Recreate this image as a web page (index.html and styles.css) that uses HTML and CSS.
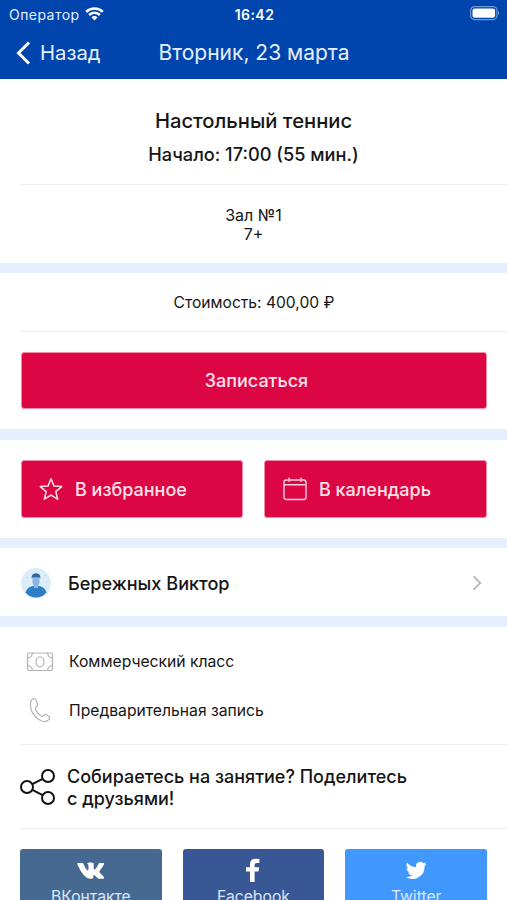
FILE: index.html
```html
<!DOCTYPE html>
<html lang="ru">
<head>
<meta charset="utf-8">
<title>Настольный теннис</title>
<link rel="stylesheet" href="styles.css">
</head>
<body>
<header class="header">
  <div class="status">
    <div class="carrier"><span>Оператор</span>
      <svg width="19" height="14" viewBox="0 0 19 14" fill="none" stroke="#fff" stroke-width="2.5"><path d="M1.2 4.9a11.8 11.8 0 0 1 16.6 0M4.1 8a7.6 7.6 0 0 1 10.8 0"/><path d="M9.5 13.5 6.4 10.3a4.4 4.4 0 0 1 6.2 0z" fill="#fff" stroke="none"/></svg>
    </div>
    <span class="clock">16:42</span>
    <svg class="battery" width="31" height="15" viewBox="0 0 31 15"><rect x="1.6" y=".6" width="26.4" height="13" rx="4" fill="none" stroke="#6f98d6" stroke-width="1.2"/><rect x="3.5" y="2.4" width="22.600" height="9.4" rx="2.2" fill="#fff"/><path d="M29 4.8q2.4 2.2 0 4.4z" fill="#6f98d6"/></svg>
  </div>
  <nav class="navbar">
    <div class="back"><svg width="15" height="24" viewBox="0 0 15 24" fill="none" stroke="#fff" stroke-width="3"><path d="M13 1.5 2.5 12 13 22.5"/></svg><span>Назад</span></div>
    <h1>Вторник, 23 марта</h1>
  </nav>
</header>
<main>
  <section class="intro">
    <h2>Настольный теннис</h2>
    <p class="start">Начало: 17:00 (55 мин.)</p>
  </section>
  <section class="hall line"><p>Зал №1</p><p>7+</p></section>
  <div class="band"></div>
  <section class="price"><span>Стоимость: 400,00 ₽</span></section>
  <section class="signup line"><button class="button"><span>Записаться</span></button></section>
  <div class="band band-tall"></div>
  <section class="actions">
    <button class="button with-icon"><svg width="24" height="24" viewBox="0 0 24 24" fill="none" stroke="#ffe2ea" stroke-width="1.5" stroke-linejoin="round"><path d="m12 1.800 3 7.300 7.700.5-5.900 5 1.900 7.600L12 18.100l-6.700 4.100 1.900-7.600-5.900-5L9 9.100z"/></svg><span>В избранное</span></button>
    <button class="button with-icon calendar"><svg width="24" height="24" viewBox="0 0 24 24" fill="none" stroke="#ffd0dd" stroke-width="1.4"><rect x="1" y="3" width="22" height="19.500" rx="2.300"/><path d="M1 7.800h22M6 .8v4M18 .8v4"/></svg><span>В календарь</span></button>
  </section>
  <div class="band"></div>
  <section class="coach">
    <svg class="avatar" width="30" height="30" viewBox="0 0 30 30"><circle cx="15" cy="15" r="15" fill="#dcedfa"/><path d="M4.500 24.500c1-4.200 4.200-5.800 7.500-6.600h6c3.300.8 6.600 2.400 7.500 6.600Q21.500 29.500 15 29.500T4.500 24.500z" fill="#2c7fc4"/><path d="M11.500 9h7v5.500q-.5 2.500-1.500 3.200V20h-4v-2.300q-1.500-1.200-1.500-3.200z" fill="#8eb4e2"/><path d="M10.700 10.800Q10 5.400 15 5.200q5 .2 4.300 5.600l-1-1.500h-6.600z" fill="#2c689f"/><path d="M5 9.500h2M23 7.500h2M25 14h1.500" stroke="#b7d7ed"/></svg>
    <span class="coach-name">Бережных Виктор</span>
    <svg class="chevron" width="10" height="16" viewBox="0 0 10 16" fill="none" stroke="#bdbdbd" stroke-width="2"><path d="m1.500 1.200 6.800 6.800-6.800 6.800"/></svg>
  </section>
  <div class="band band-tall"></div>
  <section class="details">
    <div class="detail"><svg width="28" height="20" viewBox="0 0 28 20" fill="none" stroke="#b3b3b3" stroke-width="1.2"><rect x="1.500" y="1" width="25" height="17.500" rx="1.500"/><ellipse cx="14" cy="9.800" rx="4" ry="5"/><path d="M1.500 6q4.500-.5 5-5M21.500 1q.5 4.500 5 5M1.500 13.500q4.500.5 5 5M21.500 18.500q.5-4.500 5-5"/></svg><span>Коммерческий класс</span></div>
    <div class="detail"><svg width="28" height="26" viewBox="0 0 28 26" fill="none" stroke="#b3b3b3" stroke-width="1.2" stroke-linejoin="round"><path d="M6.300 1.200C7.800.3 9.300.5 10 2.200l1.500 3.600c.6 1.700-.2 2.500-1.500 3.400-1 .8-.8 1.700-.2 2.900 1.300 2.400 3.100 4.400 5.100 5.600 1.200.8 2 .6 2.800-.3.900-1 2-1.200 3.200-.4l2 1.500c1.200.9.9 2.200-.2 3.200-2.800 2.800-6.600 2.500-10.700-.8C7.200 17.300 4.700 12.300 4.400 7.400 4.200 4.700 4.600 2.400 6.300 1.200z"/></svg><span>Предварительная запись</span></div>
  </section>
  <section class="invite line">
    <svg width="36" height="36" viewBox="0 0 36 36" fill="none" stroke="#111" stroke-width="2"><circle cx="7" cy="18" r="6"/><circle cx="28" cy="7" r="6"/><circle cx="28" cy="29" r="6"/><path d="m12.300 15.200 10.400-5.400m-10.400 11 10.400 5.400"/></svg>
    <p><span>Собираетесь на занятие? Поделитесь</span><br><span>с друзьями!</span></p>
  </section>
  <section class="social line">
    <div class="network vk"><svg width="28" height="24" viewBox="0 0 28 24" fill="#fff"><path d="M1 5h4.300q.8 0 1.100.8 1.900 5 4 6.600 1.100.3 1.100-1.300V7.700Q11.400 6 10 5.500q.8-1 3-1 3.300-.1 3.700 1v5.300q.3 1.300 1.400.5 1.900-1.800 3.400-5.400.4-.9 1.200-.9H26q1.500.1 1 1.300-.9 2.500-4.400 6.700-.6.9.2 1.800 3.500 3.200 4.200 4.700.4 1.100-1 1.200h-4q-1 0-1.800-.9-2.800-3.100-3.500-2.700-.4.200-.4 2.200 0 1.400-1.400 1.400h-2Q6.700 20.500.4 6.500-.1 5.100 1 5z"/></svg><span>ВКонтакте</span></div>
    <div class="network facebook"><svg width="18" height="24" viewBox="0 0 18 24" fill="#fff"><path d="M6 24V13.500H2V9.300h4V6.200Q6 .8 11.600.8q2.300 0 3.800.3v3.800h-2.500q-2.300 0-2.300 2.100v2.300h4.600l-.7 4.200h-3.900V24z"/></svg><span>Facebook</span></div>
    <div class="network twitter"><svg width="22" height="24" viewBox="0 0 24 24" fill="#fff"><path d="M23.600 5.200a9 9 0 0 1-2.600.8 4.500 4.500 0 0 0 2-2.500 9 9 0 0 1-2.900 1.100 4.700 4.700 0 0 0-8 4.300A13.300 13.300 0 0 1 2.400 4a4.700 4.700 0 0 0 1.500 6.300 4.600 4.600 0 0 1-2.100-.6 4.700 4.700 0 0 0 3.700 4.700 4.700 4.700 0 0 1-2.100.1 4.700 4.700 0 0 0 4.400 3.200A9.500 9.500 0 0 1 1 19.600a13.300 13.300 0 0 0 20.400-12q1.300-.9 2.200-2.400z"/></svg><span>Twitter</span></div>
  </section>
</main>
</body>
</html>
```
FILE: styles.css
```css
* { box-sizing: border-box; }
html, body { height: 900px; overflow: hidden; }
body { margin: 0; font-family: Inter, "Liberation Sans", sans-serif; color: #151515; background: #fff; }
h1, h2, p { margin: 0; font-weight: 400; }
svg { display: block; flex: none; }
span { white-space: nowrap; }
.header { height: 79px; background: #0045ad; color: #e5efff; }
.status { height: 28px; display: grid; grid-template-columns: 1fr auto 1fr; align-items: center; padding: 0 7px 0 9px; }
.carrier { display: flex; gap: 5px; align-items: center; font-size: 14px; letter-spacing: .45px; }
.carrier svg { margin-top: -1px; }
.clock { font-size: 14px; font-weight: 600; letter-spacing: .45px; color: #fff; }
.battery { justify-self: end; margin-top: -1px; }
.navbar { display: grid; grid-template-columns: 1fr auto 1fr; height: 49px; align-items: center; padding: 0 15px 0 16px; }
.back { display: flex; align-items: center; gap: 9px; font-size: 20.3px; }
.navbar h1 { font-size: 21px; }
.intro { height: 105px; text-align: center; padding-top: 28px; }
.intro h2 { font-size: 20.2px; line-height: 28px; font-weight: 500; }
.start { margin-top: 6px; font-size: 18.2px; line-height: 26px; font-weight: 500; }
.line { position: relative; }
.line::before { content: ""; position: absolute; left: 20px; right: 0; top: 0; height: 1px; background: #ededed; }
.hall { height: 79px; padding-top: 22px; text-align: center; font-size: 16px; line-height: 19px; }
.band { height: 10px; background: #e6effd; }
.band-tall { height: 11px; }
.price { height: 58px; display: flex; align-items: center; justify-content: center; padding-left: 1px; font-size: 15.6px; }
.signup { height: 98px; padding: 21px 20px 20px 21px; }
.button { display: flex; align-items: center; justify-content: center; width: 100%; height: 57px; border: 1px solid #f28baa; border-radius: 3px; padding: 0; background: #dc0645; color: #ffe2ea; font: 500 18px Inter, "Liberation Sans", sans-serif; }
.signup .button { padding-left: 5px; }
.actions { height: 98px; padding: 20px 20px 20px 21px; display: grid; grid-template-columns: 222px 1fr; gap: 21px; }
.actions .with-icon { justify-content: flex-start; padding-left: 17px; gap: 12px; height: 58px; }
.actions .calendar { padding-left: 18px; }
.coach { height: 68px; display: flex; align-items: center; padding: 2px 25px 0 21px; }
.coach-name { margin-left: 17px; font-size: 18.1px; font-weight: 500; }
.chevron { margin-left: auto; }
.details { height: 117px; padding: 10px 26px; }
.detail { height: 49px; display: flex; align-items: center; gap: 15px; font-size: 15.7px; }
.invite { height: 84px; display: flex; align-items: center; gap: 11px; padding: 2px 20px 0; font-size: 18px; line-height: 22px; }
.invite p { font-weight: 500; padding-top: 1px; }
.social { height: 90px; padding: 21px 20px 0; display: grid; grid-template-columns: repeat(3, 1fr); gap: 21px; }
.network { height: 69px; border-radius: 3px; display: flex; flex-direction: column; align-items: center; padding-top: 9px; gap: 5px; font-size: 15.7px; color: #dce7f7; }
.vk { background: #466991; }
.facebook { background: #3a5795; }
.twitter { background: #4198fc; }
```
